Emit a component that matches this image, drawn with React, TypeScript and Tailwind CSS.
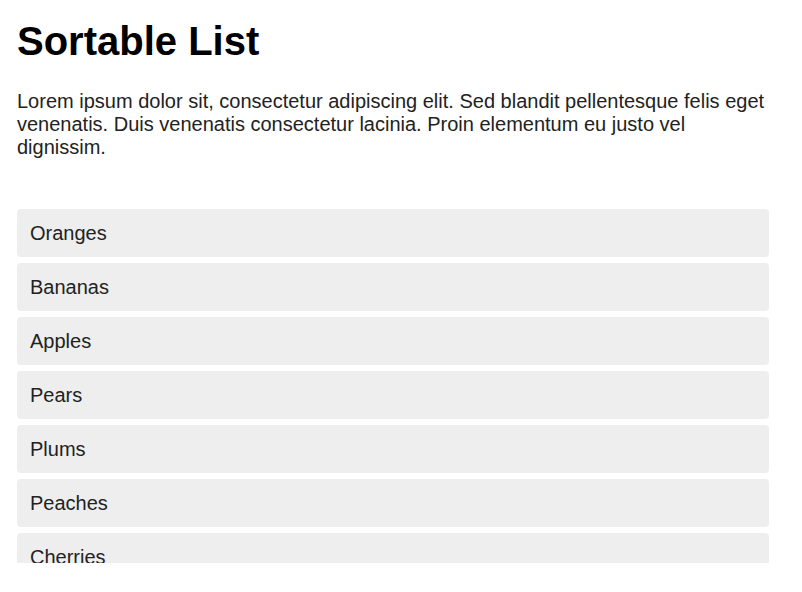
const items = ['Oranges', 'Bananas', 'Apples', 'Pears', 'Plums', 'Peaches', 'Cherries', 'Grapes', 'Mangoes'];

export default function App() {
  return (
    <div className="pl-[17px] pr-[33px] pt-[18px] font-['Liberation_Sans',Arial,sans-serif] bg-white">
      <h1 className="text-[40px] leading-[46px] font-bold text-black">Sortable List</h1>
      <p className="mt-[26px] text-[20px] leading-[23px] text-[#222]">
        Lorem ipsum dolor sit, consectetur adipiscing elit. Sed blandit pellentesque felis eget venenatis. Duis
        venenatis consectetur lacinia. Proin elementum eu justo vel dignissim.
      </p>
      <ul className="mt-[50px] h-[354px] overflow-hidden flex flex-col gap-[6px]">
        {items.map((item) => (
          <li
            key={item}
            className="shrink-0 h-[48px] flex items-center px-[13px] bg-[#eee] rounded-[4px] text-[20px] text-[#222]"
          >
            {item}
          </li>
        ))}
      </ul>
    </div>
  );
}
